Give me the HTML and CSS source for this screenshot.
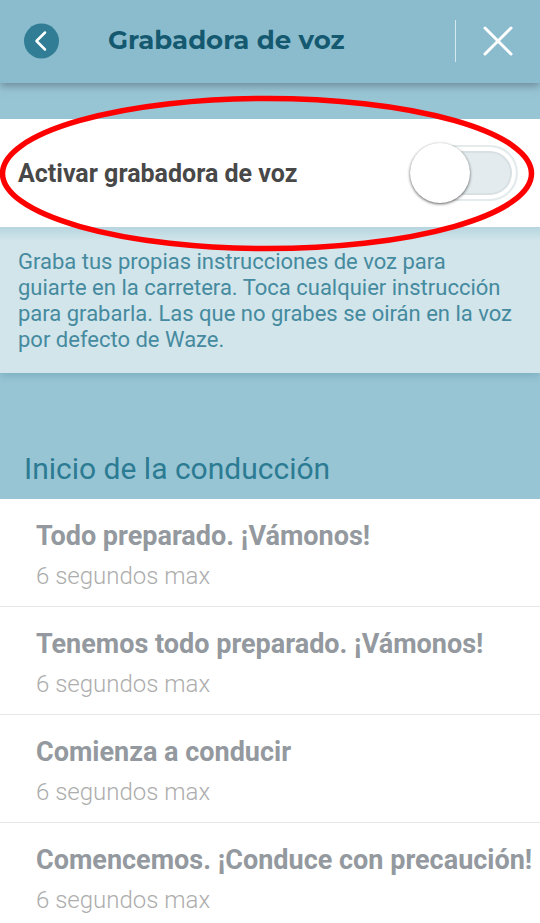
FILE: index.html
```html
<!DOCTYPE html>
<html lang="es">
<head>
<meta charset="utf-8">
<meta name="viewport" content="width=device-width, initial-scale=1">
<title>Grabadora de voz</title>
<link rel="stylesheet" href="styles.css">
</head>
<body>
<header class="topbar">
  <button class="icon-button back" type="button" aria-label="Atrás">
    <svg width="36" height="36" viewBox="0 0 36 36"><circle cx="17.500" cy="18" r="17.500" fill="#317d95"/><path d="M21 9.500l-8.500 8.500 8.500 8.500" fill="none" stroke="#fff" stroke-width="2.500" stroke-linecap="round" stroke-linejoin="round"/></svg>
  </button>
  <h1 class="title">Grabadora de voz</h1>
  <button class="icon-button close" type="button" aria-label="Cerrar">
    <svg width="30" height="30" viewBox="0 0 30 30"><path d="M2 2l26 26M28 2L2 28" stroke="#fff" stroke-width="3" stroke-linecap="round"/></svg>
  </button>
</header>
<main>
  <section class="activation">
    <label class="activation-label" for="recorder">Activar grabadora de voz</label>
    <input class="switch" id="recorder" type="checkbox" role="switch">
    <svg class="highlight" viewBox="0 0 540 158" preserveAspectRatio="none" aria-hidden="true"><ellipse cx="267" cy="79.500" rx="264.500" ry="75" fill="none" stroke="#f00" stroke-width="5.500"/></svg>
  </section>
  <p class="description">Graba tus propias instrucciones de voz para guiarte en la carretera. Toca cualquier instrucción para grabarla. Las que no grabes se oirán en la voz por defecto de Waze.</p>
  <h2 class="section-title">Inicio de la conducción</h2>
  <ul class="prompts">
    <li class="prompt"><h3 class="prompt-title">Todo preparado. ¡Vámonos!</h3><p class="prompt-limit">6 segundos max</p></li>
    <li class="prompt"><h3 class="prompt-title">Tenemos todo preparado. ¡Vámonos!</h3><p class="prompt-limit">6 segundos max</p></li>
    <li class="prompt"><h3 class="prompt-title">Comienza a conducir</h3><p class="prompt-limit">6 segundos max</p></li>
    <li class="prompt"><h3 class="prompt-title">Comencemos. ¡Conduce con precaución!</h3><p class="prompt-limit">6 segundos max</p></li>
  </ul>
</main>
</body>
</html>
```
FILE: styles.css
```css
* { box-sizing: border-box; }
html { background: #98c5d4; }
body { margin: 0; font-family: Roboto, sans-serif; overflow-x: hidden; }
h1, h2, h3, p, ul { margin: 0; padding: 0; }
.topbar { display: flex; align-items: center; height: 83px; padding: 0 12px 2px 24px; background: #8bbccd; box-shadow: 0 3px 8px rgba(80, 100, 115, .6); }
.icon-button { display: flex; align-items: center; justify-content: center; padding: 0; border: 0; background: none; }
.title { flex: 1; margin-left: 48px; padding-bottom: 2px; color: #14596f; font: 700 26px/38px Montserrat, "Open Sans", sans-serif; }
.close { width: 73px; height: 42px; padding-left: 12px; border-left: 1px solid #d5e8ee; }
.activation { position: relative; display: flex; align-items: center; justify-content: space-between; height: 108px; margin-top: 36px; padding: 0 22px 0 18px; background: #fff; }
.activation-label { padding-top: 2px; color: #484848; font-size: 25px; font-weight: 700; line-height: 32px; }
.switch { position: relative; appearance: none; width: 108px; height: 56px; margin: 0; border: 2px solid #e4ebed; border-radius: 28px; background: #e3ebee; box-shadow: inset 0 0 0 4px #fff, inset 0 0 0 6px #d8e0e3; }
.switch::before { content: ""; position: absolute; left: -2px; top: -4px; width: 60px; height: 60px; border-radius: 50%; background: #fff; box-shadow: 0 1px 3px rgba(0, 0, 0, .65); }
.highlight { position: absolute; left: 0; top: -25px; width: 100%; height: 158px; pointer-events: none; }
.description { padding: 22px 24px 20px 18px; background: linear-gradient(#b7d5df, #d1e5eb 14px); color: #458a9e; font-size: 22px; font-weight: 400; line-height: 26px; box-shadow: 0 3px 8px rgba(80, 145, 165, .4); }
.section-title { padding: 76px 24px 10px; color: #2b7b93; font-size: 30px; font-weight: 400; line-height: 40px; }
.prompts { list-style: none; background: #fff; }
.prompt { height: 108px; padding: 21px 0 0 36px; border-bottom: 1px solid #e5e7e8; white-space: nowrap; }
.prompt-title { color: #93999e; font-size: 27px; font-weight: 700; line-height: 32px; }
.prompt-limit { margin-top: 8px; color: #adadad; font-size: 24px; font-weight: 300; line-height: 32px; }
```
